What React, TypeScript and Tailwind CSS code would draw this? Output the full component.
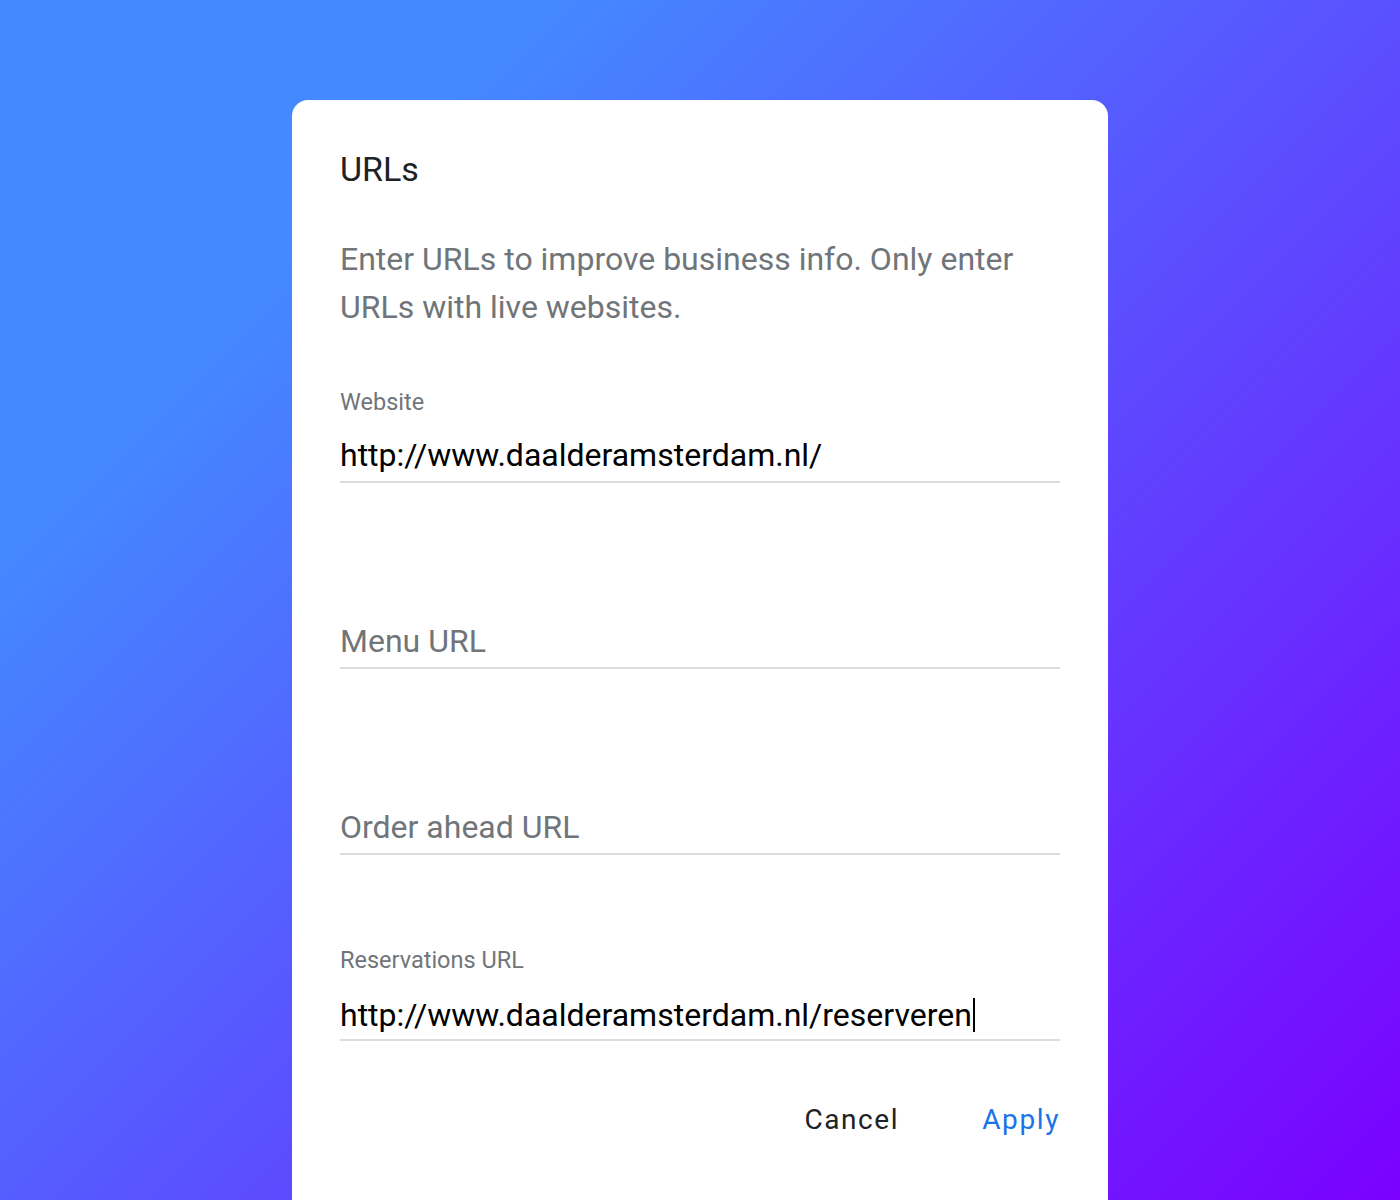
const fields = [
  { label: "Website", value: "http://www.daalderamsterdam.nl/" },
  { label: "Menu URL", value: "" },
  { label: "Order ahead URL", value: "" },
  { label: "Reservations URL", value: "http://www.daalderamsterdam.nl/reserveren", focused: true },
];

function UrlField({
  label,
  value,
  focused,
}: {
  label: string;
  value: string;
  focused?: boolean;
}) {
  const filled = value.length > 0;
  return (
    <div className="mb-[91px] last:mb-0">
      <div
        className={`h-[28px] text-[23.5px] leading-[28px] text-[#70757a] ${filled ? "" : "invisible"}`}
      >
        {label}
      </div>
      <div className="mt-[19px] box-content flex h-[40px] items-center border-b-2 border-[#dadce0] pb-[6px]">
        {filled ? (
          <span className="text-[32px] leading-[40px] text-black">
            {value}
            {focused && (
              <span className="ml-[1px] inline-block h-[34px] w-[2px] translate-y-[6px] bg-black align-baseline" />
            )}
          </span>
        ) : (
          <span className="text-[32px] leading-[40px] text-[#70757a]">{label}</span>
        )}
      </div>
    </div>
  );
}

export default function App() {
  return (
    <div
      className="h-[1200px] w-[1400px] overflow-hidden bg-[linear-gradient(135deg,#4489ff_21%,#7a00ff_100%)] pt-[100px]"
      style={{ fontFamily: "Roboto, 'Noto Sans', sans-serif" }}
    >
      <div className="relative mx-auto h-[1200px] w-[816px] rounded-t-[16px] bg-white px-[48px] pt-[150px]">
        <div className="absolute left-[48px] top-[49px] text-[34px] leading-[40px] text-[#202124]">URLs</div>
        <p className="-mt-[15px] text-[32px] leading-[48px] text-[#70757a]">
          Enter URLs to improve business info. Only enter URLs with live websites.
        </p>
        <div className="mt-[57px]">
          {fields.map((f) => (
            <UrlField key={f.label} label={f.label} value={f.value} focused={f.focused} />
          ))}
        </div>
        <div className="mt-[61px] flex justify-end gap-[83px] text-[28px] font-normal leading-[36px] tracking-[1.6px]">
          <button className="text-[#202124]">Cancel</button>
          <button className="text-[#1a73e8]">Apply</button>
        </div>
      </div>
    </div>
  );
}
